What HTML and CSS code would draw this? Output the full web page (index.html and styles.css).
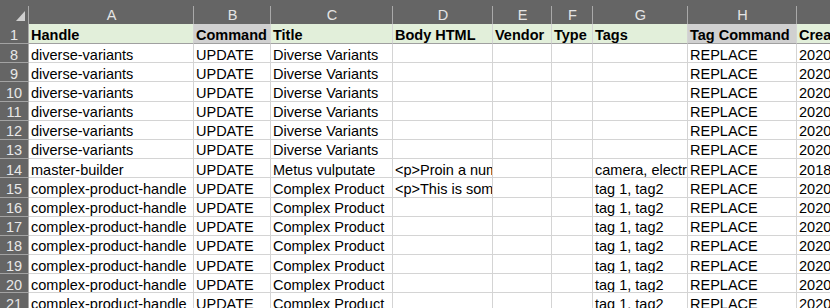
FILE: index.html
```html
<!DOCTYPE html>
<html>
<head>
<meta charset="utf-8">
<link rel="stylesheet" href="styles.css">
</head>
<body>
<div class="sheet">
  <div class="ch corner"><span class="tri"></span></div>
  <div class="ch">A</div><div class="ch">B</div><div class="ch">C</div><div class="ch">D</div><div class="ch">E</div><div class="ch">F</div><div class="ch">G</div><div class="ch">H</div><div class="ch"></div>

  <div class="rh frz">1</div>
  <div class="c h g frz">Handle</div><div class="c h s frz">Command</div><div class="c h g frz">Title</div><div class="c h g frz">Body HTML</div><div class="c h g frz">Vendor</div><div class="c h g frz">Type</div><div class="c h g frz">Tags</div><div class="c h s frz">Tag Command</div><div class="c h g frz">Created At</div>

  <div class="rh">8</div><div class="c">diverse-variants</div><div class="c">UPDATE</div><div class="c">Diverse Variants</div><div class="c"></div><div class="c"></div><div class="c"></div><div class="c"></div><div class="c">REPLACE</div><div class="c">2020-05-14</div>
  <div class="rh">9</div><div class="c">diverse-variants</div><div class="c">UPDATE</div><div class="c">Diverse Variants</div><div class="c"></div><div class="c"></div><div class="c"></div><div class="c"></div><div class="c">REPLACE</div><div class="c">2020-05-14</div>
  <div class="rh">10</div><div class="c">diverse-variants</div><div class="c">UPDATE</div><div class="c">Diverse Variants</div><div class="c"></div><div class="c"></div><div class="c"></div><div class="c"></div><div class="c">REPLACE</div><div class="c">2020-05-14</div>
  <div class="rh">11</div><div class="c">diverse-variants</div><div class="c">UPDATE</div><div class="c">Diverse Variants</div><div class="c"></div><div class="c"></div><div class="c"></div><div class="c"></div><div class="c">REPLACE</div><div class="c">2020-05-14</div>
  <div class="rh">12</div><div class="c">diverse-variants</div><div class="c">UPDATE</div><div class="c">Diverse Variants</div><div class="c"></div><div class="c"></div><div class="c"></div><div class="c"></div><div class="c">REPLACE</div><div class="c">2020-05-14</div>
  <div class="rh">13</div><div class="c">diverse-variants</div><div class="c">UPDATE</div><div class="c">Diverse Variants</div><div class="c"></div><div class="c"></div><div class="c"></div><div class="c"></div><div class="c">REPLACE</div><div class="c">2020-05-14</div>
  <div class="rh">14</div><div class="c">master-builder</div><div class="c">UPDATE</div><div class="c">Metus vulputate</div><div class="c">&lt;p&gt;Proin a numquam</div><div class="c"></div><div class="c"></div><div class="c">camera, electronics</div><div class="c">REPLACE</div><div class="c">2018-09-21</div>
  <div class="rh">15</div><div class="c">complex-product-handle</div><div class="c">UPDATE</div><div class="c">Complex Product</div><div class="c">&lt;p&gt;This is some text</div><div class="c"></div><div class="c"></div><div class="c">tag 1, tag2</div><div class="c">REPLACE</div><div class="c">2020-05-14</div>
  <div class="rh">16</div><div class="c">complex-product-handle</div><div class="c">UPDATE</div><div class="c">Complex Product</div><div class="c"></div><div class="c"></div><div class="c"></div><div class="c">tag 1, tag2</div><div class="c">REPLACE</div><div class="c">2020-05-14</div>
  <div class="rh">17</div><div class="c">complex-product-handle</div><div class="c">UPDATE</div><div class="c">Complex Product</div><div class="c"></div><div class="c"></div><div class="c"></div><div class="c">tag 1, tag2</div><div class="c">REPLACE</div><div class="c">2020-05-14</div>
  <div class="rh">18</div><div class="c">complex-product-handle</div><div class="c">UPDATE</div><div class="c">Complex Product</div><div class="c"></div><div class="c"></div><div class="c"></div><div class="c">tag 1, tag2</div><div class="c">REPLACE</div><div class="c">2020-05-14</div>
  <div class="rh">19</div><div class="c">complex-product-handle</div><div class="c">UPDATE</div><div class="c">Complex Product</div><div class="c"></div><div class="c"></div><div class="c"></div><div class="c">tag 1, tag2</div><div class="c">REPLACE</div><div class="c">2020-05-14</div>
  <div class="rh">20</div><div class="c">complex-product-handle</div><div class="c">UPDATE</div><div class="c">Complex Product</div><div class="c"></div><div class="c"></div><div class="c"></div><div class="c">tag 1, tag2</div><div class="c">REPLACE</div><div class="c">2020-05-14</div>
  <div class="rh">21</div><div class="c">complex-product-handle</div><div class="c">UPDATE</div><div class="c">Complex Product</div><div class="c"></div><div class="c"></div><div class="c"></div><div class="c">tag 1, tag2</div><div class="c">REPLACE</div><div class="c">2020-05-14</div>
</div>
</body>
</html>
```

FILE: styles.css
```css
html, body {
  margin: 0;
  padding: 0;
  overflow: hidden;
  background: #ffffff;
}

.sheet {
  display: grid;
  grid-template-columns: 29px 165px 77px 122px 100px 59px 41px 95px 109px 34px;
  grid-template-rows: 24px 20px;
  grid-auto-rows: 19.2px;
  width: 831px;
  font-family: "Liberation Sans", Arial, sans-serif;
  font-size: 14.5px;
  color: #000000;
}

.ch {
  box-sizing: border-box;
  background: linear-gradient(#a9a9a9, #a9a9a9) right 6px / 1px calc(100% - 6px) no-repeat, #656565;
  color: #e4e4e4;
  text-align: center;
  padding-top: 7px;
  line-height: 17px;
  overflow: hidden;
  white-space: nowrap;
}

.corner {
  position: relative;
}

.tri {
  position: absolute;
  right: 4px;
  bottom: 3px;
  width: 0;
  height: 0;
  border-left: 9px solid transparent;
  border-bottom: 10px solid #cfcfcf;
}

.rh {
  box-sizing: border-box;
  background: #656565;
  color: #e8e8e8;
  text-align: center;
  border-bottom: 1px solid #a3a3a3;
  border-right: 1px solid #a9a9a9;
  padding-top: 2.5px;
  line-height: 16px;
  overflow: hidden;
  white-space: nowrap;
}

.c {
  box-sizing: border-box;
  border-right: 1px solid #d4d4d4;
  border-bottom: 1px solid #d4d4d4;
  padding: 2.5px 0 0 2px;
  line-height: 16px;
  overflow: hidden;
  white-space: nowrap;
}

.h {
  font-weight: bold;
}

.g {
  background: #e2efda;
}

.s {
  background: #d0d0d0;
}

.c.frz {
  border-bottom: 1px solid #a0a0a0;
}
```
